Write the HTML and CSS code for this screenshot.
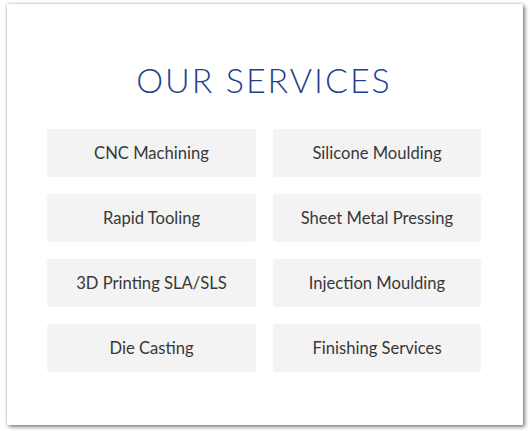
FILE: index.html
```html
<!DOCTYPE html>
<html>
<head>
<meta charset="utf-8">
<link rel="stylesheet" href="styles.css">
</head>
<body>
<div class="card">
  <h2 class="title">OUR SERVICES</h2>
  <div class="grid">
    <div class="item">CNC Machining</div>
    <div class="item">Silicone Moulding</div>
    <div class="item">Rapid Tooling</div>
    <div class="item">Sheet Metal Pressing</div>
    <div class="item">3D Printing SLA/SLS</div>
    <div class="item">Injection Moulding</div>
    <div class="item">Die Casting</div>
    <div class="item">Finishing Services</div>
  </div>
</div>
</body>
</html>
```

FILE: styles.css
```css
html, body {
  margin: 0;
  padding: 0;
  background: #ffffff;
}
body {
  padding: 4px 0 6px 7px;
  font-family: Lato, "Open Sans", sans-serif;
}
.card {
  box-sizing: border-box;
  width: 516px;
  height: 421px;
  background: #fff;
  box-shadow: 2px 2px 4px rgba(0,0,0,0.45), 0 0 3px rgba(0,0,0,0.25);
  padding: 56px 0 0 40px;
}
.title {
  margin: 0 0 29px 0;
  width: 434px;
  text-align: center;
  font-family: Lato, sans-serif;
  font-weight: 300;
  font-size: 34px;
  line-height: 40px;
  letter-spacing: 2px;
  color: #243f8c;
}
.grid {
  display: grid;
  grid-template-columns: 209px 208px;
  column-gap: 17px;
  row-gap: 17px;
}
.item {
  height: 48px;
  background: #f3f3f3;
  border-radius: 3px;
  display: flex;
  align-items: center;
  justify-content: center;
  font-size: 16.6px;
  color: #383838;
}
```
